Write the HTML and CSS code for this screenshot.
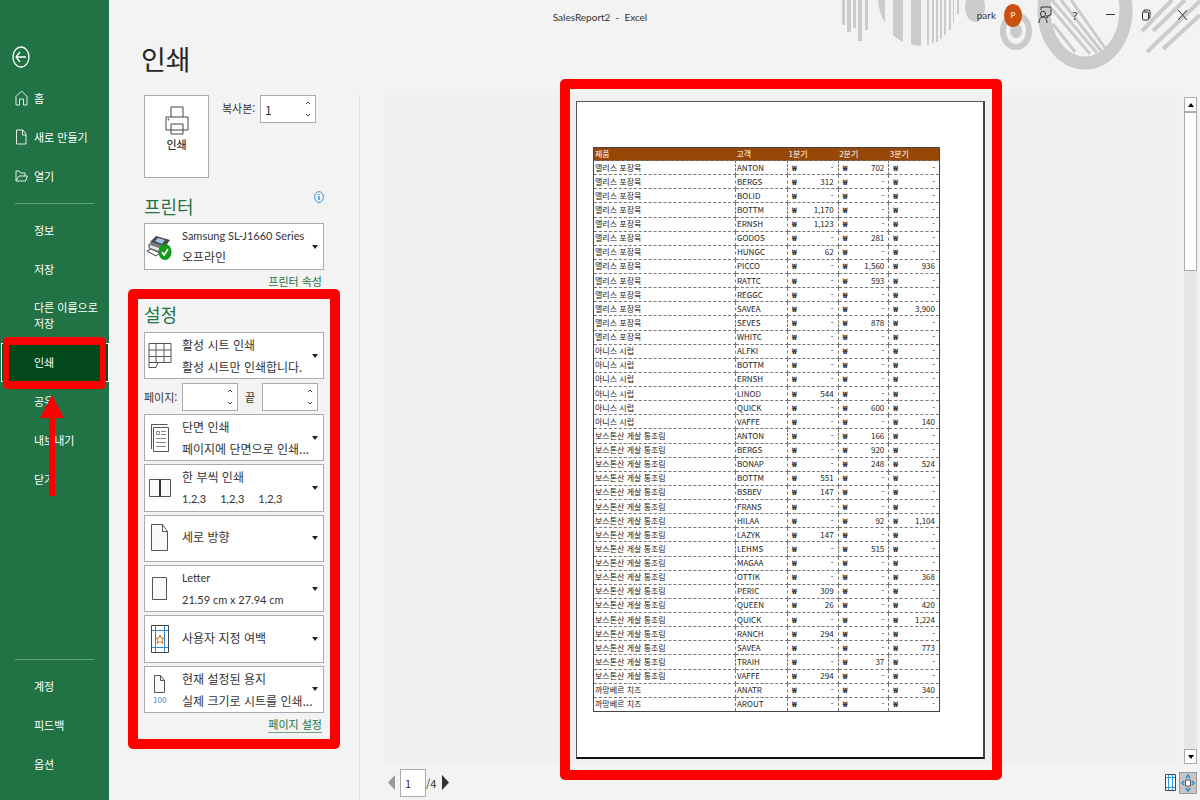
FILE: index.html
```html
<!DOCTYPE html>
<html lang="ko">
<head>
    <meta charset="utf-8">
    <title>SalesReport2 - Excel</title>
    <link rel="stylesheet" href="styles.css">
</head>
<body>
    <header class="titlebar">
        <svg class="art" width="360" height="72" viewBox="0 0 360 72" fill="#cbcbcb">
            <path d="M2 0h3v25h-3zM7 0h4v32h-4zM13 0h3v28h-3zM18 0h4v41h-4zM25 0h3v30h-3zM38 0h7v23q-6-10-7-23zM53 0h10v42q-5-2-10-7zM71 0h10v46q-5 0-10-2zM87 0h2v45h-2zM92 0h2v43h-2zM96 0h2v42h-2zM100 0h2v39h-2zM104 0h2v35h-2zM109 0h2v30h-2zM113 0h1v23h-1zM117 0h2v14h-2z"/>
            <ellipse cx="135" cy="7" rx="10" ry="15"/>
            <ellipse cx="176" cy="31" rx="13" ry="16" fill="none" stroke="#cbcbcb" stroke-width="6"/>
            <ellipse cx="176" cy="31" rx="6" ry="7"/>
            <ellipse cx="245" cy="10" rx="41" ry="53" fill="none" stroke="#cbcbcb" stroke-width="13"/>
            <path d="M212 9l38 45M212 0l45 53M221 0l41 52M231 0l34 48M213 24l22 28" stroke="#cbcbcb" stroke-width="3"/>
            <path d="M332 0l-30 31M345 0l-32 31M360 1l-53 51M360 15l-37 34" stroke="#cbcbcb" stroke-width="4"/>
        </svg>
        <span class="file-name">SalesReport2&nbsp; -&nbsp; Excel</span>
        <div class="window-tools">
            <span class="user">park</span>
            <span class="avatar">P</span>
            <button class="tool feedback" aria-label="피드백">
                <svg width="14" height="18" viewBox="0 0 14 18" fill="none" stroke="#333"><ellipse cx="5" cy="8" rx="2.5" ry="3"/><path d="M1 17q0-6 4-6t4 6M3 4V1h10v8h-2l-2 3V9"/></svg>
            </button>
            <button class="tool help" aria-label="도움말">?</button>
            <button class="tool" aria-label="최소화">
                <svg width="9" height="12" viewBox="0 0 9 12" stroke="#333"><path d="M0 5.5h9"/></svg>
            </button>
            <button class="tool" aria-label="이전 크기로 복원">
                <svg width="9" height="12" viewBox="0 0 9 12" fill="none" stroke="#333"><rect x="0.500" y="3" width="6" height="8" rx="1"/><path d="M2 3V1h5l1 1v7H7"/></svg>
            </button>
            <button class="tool" aria-label="닫기">
                <svg width="9" height="12" viewBox="0 0 9 12" stroke="#333"><path d="M0 1l9 10M9 1L0 11"/></svg>
            </button>
        </div>
    </header>

    <nav class="sidebar">
        <button class="back" aria-label="뒤로">
            <svg width="18" height="22" viewBox="0 0 18 22" fill="none" stroke="#fff" stroke-width="1.300"><ellipse cx="9" cy="11" rx="8" ry="10"/><path d="M14 11H4M8 6l-4 5 4 5"/></svg>
        </button>
        <a class="nav-item" href="#home">
            <svg class="nav-icon" width="13" height="16" viewBox="0 0 13 16" fill="none" stroke="#e4efe8"><path d="M1 6.500L6.500 1 12 6.500V15H8.500V9h-4v6H1z"/></svg>홈</a>
        <a class="nav-item" href="#new">
            <svg class="nav-icon" width="13" height="16" viewBox="0 0 13 16" fill="none" stroke="#e4efe8"><path d="M1.500 1H8l3 4v10H1.500zM7.500 1v5H11"/></svg>새로 만들기</a>
        <a class="nav-item" href="#open">
            <svg class="nav-icon" width="13" height="16" viewBox="0 0 13 16" fill="none" stroke="#e4efe8"><path d="M1 13V3h3l1.500 2H10v3M1 13l3-5h8.500l-2 5z"/></svg>열기</a>
        <hr class="line">
        <a class="nav-item" href="#info">정보</a>
        <a class="nav-item" href="#save">저장</a>
        <a class="nav-item tall" href="#saveas">다른 이름으로 저장</a>
        <a class="nav-item active" href="#print">인쇄<span class="mark"></span></a>
        <a class="nav-item" href="#share">공유
            <svg class="arrow" width="24" height="101" viewBox="0 0 24 101" fill="#f00"><path d="M12 0l12 23h-9v78H9V23H0z"/></svg></a>
        <a class="nav-item" href="#export">내보내기</a>
        <a class="nav-item" href="#close">닫기</a>
        <hr class="line bottom">
        <a class="nav-item" href="#account">계정</a>
        <a class="nav-item" href="#feedback">피드백</a>
        <a class="nav-item" href="#options">옵션</a>
    </nav>

    <main class="content">
        <h1>인쇄</h1>
        <section class="panel">
            <div class="print-row">
                <button class="print-button">
                    <svg width="24" height="29" viewBox="0 0 24 29" fill="#fff" stroke="#444"><path d="M6 11V1h12v10M1 11h22v13H1zM6 18h12v10H6z"/><circle cx="3.500" cy="13.500" r="0.500"/></svg>
                    인쇄
                </button>
                <label for="copies">복사본:</label>
                <span class="spin">
                    <input type="number" id="copies" value="1">
                    <svg width="6" height="18" viewBox="0 0 6 18" fill="none" stroke="#444"><path d="M1 4l2-2 2 2M1 14l2 2 2-2"/></svg>
                </span>
            </div>

            <div class="heading">
                <h2>프린터</h2>
                <svg width="10" height="12" viewBox="0 0 10 12" fill="none" stroke="#3a96dd"><ellipse cx="5" cy="6" rx="4.400" ry="5.400"/><path d="M5 5v4M5 3v1" stroke-width="1.500"/></svg>
            </div>
            <div class="picker latin">
                <select aria-label="프린터"><option>Samsung SL-J1660 Series</option></select>
                <svg width="30" height="30" viewBox="0 0 30 30"><path d="M5 10l6-6 14 4-5 7z" fill="#4a4a4a"/><path d="M10 9l3-3 7 2-3 4z" fill="#9cc8f0"/><path d="M3 13l3-3 13 5v7L4 17z" fill="#777"/><path d="M5 13l12 4v3L5 16z" fill="#e6e6e6"/><path d="M2 19l4-2 9 4-4 3z" fill="#fff" stroke="#444"/><ellipse cx="20" cy="20" rx="6.500" ry="8" fill="#109a18"/><path d="M17 20l2 3 4-6" fill="none" stroke="#fff" stroke-width="1.800"/></svg>
                <span class="desc korean">오프라인</span>
            </div>
            <a class="link" href="#printer">프린터 속성</a>

            <div class="settings">
                <h2>설정</h2>
                <div class="picker">
                    <select aria-label="인쇄 대상"><option>활성 시트 인쇄</option></select>
                    <svg width="30" height="30" viewBox="0 0 30 30" fill="none" stroke="#555"><path d="M4 2.500h22v19H13l-2 5H4zM4 9h22M4 15.500h22M11 2.500v19M19 2.500v19M4 21.500h9"/></svg>
                    <span class="desc">활성 시트만 인쇄합니다.</span>
                </div>
                <div class="pages">
                    <label for="from">페이지:</label>
                    <span class="spin">
                        <input type="number" id="from">
                        <svg width="6" height="18" viewBox="0 0 6 18" fill="none" stroke="#444"><path d="M1 4l2-2 2 2M1 14l2 2 2-2"/></svg>
                    </span>
                    <label for="to">끝</label>
                    <span class="spin">
                        <input type="number" id="to">
                        <svg width="6" height="18" viewBox="0 0 6 18" fill="none" stroke="#444"><path d="M1 4l2-2 2 2M1 14l2 2 2-2"/></svg>
                    </span>
                </div>
                <div class="pickers">
                    <div class="picker">
                        <select aria-label="단면 또는 양면"><option>단면 인쇄</option></select>
                        <svg width="30" height="30" viewBox="0 0 30 30" fill="none" stroke="#555"><path d="M6.500 26V1.500h16M8.500 4.500h15v24h-15z"/><path d="M11.500 8.500h3v3h-3zM16 8.500h5M16 11.500h5M11 15.500h10M11 19.500h10M11 23.500h10" stroke="#888"/></svg>
                        <span class="desc">페이지에 단면으로 인쇄...</span>
                    </div>
                    <div class="picker">
                        <select aria-label="한 부씩 인쇄"><option>한 부씩 인쇄</option></select>
                        <svg width="30" height="30" viewBox="0 0 30 30" fill="#fafafa" stroke="#555"><path d="M4.500 6.500h21v17h-21z"/><path d="M15 6v18" stroke="#333" stroke-width="2"/></svg>
                        <span class="desc sets"><span>1,2,3</span><span>1,2,3</span><span>1,2,3</span></span>
                    </div>
                    <div class="picker single">
                        <select aria-label="용지 방향"><option>세로 방향</option></select>
                        <svg width="30" height="30" viewBox="0 0 30 30" fill="#fafafa" stroke="#555"><path d="M6.500 1.500h11l5 7v19h-16zM17.500 1.500v7h5"/></svg>
                    </div>
                    <div class="picker latin">
                        <select aria-label="용지 크기"><option>Letter</option></select>
                        <svg width="30" height="30" viewBox="0 0 30 30" fill="#fafafa" stroke="#555"><path d="M7.500 3.500h14v22h-14z"/></svg>
                        <span class="desc">21.59 cm x 27.94 cm</span>
                    </div>
                    <div class="picker single">
                        <select aria-label="여백"><option>사용자 지정 여백</option></select>
                        <svg width="30" height="30" viewBox="0 0 30 30" fill="none"><path d="M6.500 1.500h17v27h-17z" stroke="#444"/><path d="M10.500 2v26M19.500 2v26M7 6.500h16M7 23.500h16" stroke="#2e8bd0"/><path d="M15 11l1 3h3l-2 2 1 3.500-3-2-3 2 1-3.500-2-2h3z" stroke="#d9741a"/></svg>
                    </div>
                    <div class="picker">
                        <select aria-label="배율"><option>현재 설정된 용지</option></select>
                        <svg width="30" height="30" viewBox="0 0 30 30"><path d="M9.500 1.500h6l4 5v12h-10zM15.500 1.500v5h4" fill="#fafafa" stroke="#555"/><text class="scale" x="8" y="29">100</text></svg>
                        <span class="desc">실제 크기로 시트를 인쇄...</span>
                    </div>
                </div>
                <a class="link" href="#setup">페이지 설정</a>
                <span class="mark"></span>
            </div>
        </section>

        <section class="preview">
            <div class="canvas">
                <div class="paper">
                    <table class="report">
                        <thead>
                            <tr><th class="product">제품</th><th class="customer">고객</th><th>1분기</th><th>2분기</th><th>3분기</th></tr>
                        </thead>
                        <tbody id="rows"></tbody>
                    </table>
                    <span class="mark"></span>
                </div>
            </div>
            <div class="scrollbar">
                <button aria-label="위로"><svg width="6" height="4" viewBox="0 0 6 4"><path d="M0 4l3-4 3 4z"/></svg></button>
                <span class="thumb"></span>
                <button aria-label="아래로"><svg width="6" height="4" viewBox="0 0 6 4"><path d="M0 0h6L3 4z"/></svg></button>
            </div>
            <div class="pager">
                <button aria-label="이전 페이지"><svg width="8" height="15" viewBox="0 0 8 15" fill="#999"><path d="M7 0v15L0 7.500z"/></svg></button>
                <input class="page" type="text" value="1" aria-label="현재 페이지">
                <span>/4</span>
                <button aria-label="다음 페이지"><svg width="8" height="15" viewBox="0 0 8 15" fill="#333"><path d="M1 0v15l7-7.500z"/></svg></button>
                <button class="margins" aria-label="여백 표시">
                    <svg width="11" height="17" viewBox="0 0 11 17" fill="#fff"><path d="M0.500 0.500h10v16H0.500z" stroke="#444"/><path d="M3.500 1v15M7.500 1v15M1 3.500h9M1 13.500h9" stroke="#2e9be0"/></svg>
                </button>
                <button class="fit" aria-label="페이지 확대/축소">
                    <svg width="14" height="18" viewBox="0 0 14 18" fill="none" stroke="#2e8bd0" stroke-width="1.500"><path d="M5 4l2-3 2 3M5 14l2 3 2-3M3 7L1 9l2 2M11 7l2 2-2 2"/><path d="M4.500 6h5v6h-5z" fill="#fff" stroke="#555" stroke-width="1"/></svg>
                </button>
            </div>
        </section>
    </main>

    <script>
        // 제품별 고객 매출 (1분기, 2분기, 3분기)
        const sales = {
            "앨리스 포장육": [
                ["ANTON", "-", "702", "-"], ["BERGS", "312", "-", "-"], ["BOLID", "-", "-", "-"],
                ["BOTTM", "1,170", "-", "-"], ["ERNSH", "1,123", "-", "-"], ["GODOS", "-", "281", "-"],
                ["HUNGC", "62", "-", "-"], ["PICCO", "-", "1,560", "936"], ["RATTC", "-", "593", "-"],
                ["REGGC", "-", "-", "-"], ["SAVEA", "-", "-", "3,900"], ["SEVES", "-", "878", "-"],
                ["WHITC", "-", "-", "-"]
            ],
            "아니스 시럽": [
                ["ALFKI", "-", "-", "-"], ["BOTTM", "-", "-", "-"], ["ERNSH", "-", "-", "-"],
                ["LINOD", "544", "-", "-"], ["QUICK", "-", "600", "-"], ["VAFFE", "-", "-", "140"]
            ],
            "보스톤산 게살 통조림": [
                ["ANTON", "-", "166", "-"], ["BERGS", "-", "920", "-"], ["BONAP", "-", "248", "524"],
                ["BOTTM", "551", "-", "-"], ["BSBEV", "147", "-", "-"], ["FRANS", "-", "-", "-"],
                ["HILAA", "-", "92", "1,104"], ["LAZYK", "147", "-", "-"], ["LEHMS", "-", "515", "-"],
                ["MAGAA", "-", "-", "-"], ["OTTIK", "-", "-", "368"], ["PERIC", "309", "-", "-"],
                ["QUEEN", "26", "-", "420"], ["QUICK", "-", "-", "1,224"], ["RANCH", "294", "-", "-"],
                ["SAVEA", "-", "-", "773"], ["TRAIH", "-", "37", "-"], ["VAFFE", "294", "-", "-"]
            ],
            "까망베르 치즈": [
                ["ANATR", "-", "-", "340"], ["AROUT", "-", "-", "-"]
            ]
        };

        // 표에 행 추가
        const body = document.getElementById("rows");
        for (const product in sales) {
            for (const [customer, ...amounts] of sales[product]) {
                const row = body.insertRow();
                row.insertCell().innerText = product;
                row.insertCell().innerText = customer;
                for (const amount of amounts) {
                    const cell = row.insertCell();
                    cell.className = "amount";
                    cell.innerHTML = '<span class="won">₩</span>' + amount;
                }
            }
        }
    </script>
</body>
</html>
```
FILE: styles.css
```css
* {
    box-sizing: border-box;
}
body {
    margin: 0;
    min-height: 100vh;
    display: grid;
    grid-template-columns: 109px 1fr;
    grid-template-rows: 30px 1fr;
    background-color: #f3f3f3;
    border-bottom: 1px solid #cfcfcf;
    color: #333;
    font-family: "Noto Sans CJK KR", "Noto Sans", sans-serif;
    font-size: 12px;
}
button, input, select {
    font: inherit;
    color: inherit;
    margin: 0;
}
button {
    padding: 0;
    border: none;
    background: none;
}
svg {
    display: block;
    flex-shrink: 0;
}
h1, h2 {
    font-weight: normal;
    margin: 0;
}
.mark {
    position: absolute;
    border: 10px solid #f00;
    border-radius: 5px;
    pointer-events: none;
    z-index: 3;
}

/* title bar */
.titlebar {
    grid-area: 1 / 1 / 2 / 3;
    position: relative;
    z-index: 2;
    display: grid;
    grid-template-columns: 1fr auto 1fr;
    align-items: center;
    font-family: Lato, "Noto Sans CJK KR", sans-serif;
    font-size: 10px;
}
.art {
    position: absolute;
    top: 0;
    right: 0;
    z-index: -1;
}
.file-name {
    grid-column: 2;
    padding-top: 4px;
}
.window-tools {
    display: flex;
    align-items: center;
    justify-content: flex-end;
}
.user {
    font-size: 10px;
    margin-right: 8px;
}
.avatar {
    width: 18px;
    height: 23px;
    line-height: 23px;
    border-radius: 50%;
    background-color: #ca5010;
    color: #fff;
    font-size: 8px;
    text-align: center;
    margin-right: 10px;
}
.tool {
    width: 36px;
    height: 30px;
    display: flex;
    align-items: center;
    justify-content: center;
}
.tool.feedback {
    width: 26px;
}
.tool.help {
    width: 34px;
    font-size: 12px;
}

/* sidebar */
.sidebar {
    grid-area: 1 / 1 / 3 / 2;
    display: flex;
    flex-direction: column;
    padding: 46px 0 16px;
    background-color: #217346;
}
.back {
    width: 18px;
    height: 22px;
    margin: 0 0 11px 12px;
}
.nav-item {
    position: relative;
    display: flex;
    align-items: center;
    min-height: 39px;
    padding: 0 8px 2px 34px;
    color: #fff;
    font-size: 11px;
    line-height: 16px;
    text-decoration: none;
}
.nav-icon {
    margin: 0 6px 0 -19px;
}
.nav-item.tall {
    min-height: 54px;
}
.nav-item.active {
    margin-left: 1px;
    padding-left: 33px;
    background-color: #04491c;
    outline: 1px solid #fff;
    outline-offset: -1px;
}
.nav-item .mark {
    inset: -6px 3px -7px 2px;
    border-width: 8px 6px;
}
.arrow {
    position: absolute;
    left: 40px;
    top: 13px;
    z-index: 3;
}
.line {
    width: 79px;
    margin: 7px 0 7px 15px;
    border: none;
    border-top: 1px solid #5fa27c;
}
.line.bottom {
    margin-top: auto;
}

/* content */
.content {
    grid-area: 1 / 2 / 3 / 3;
    display: grid;
    grid-template-columns: 251px 1fr;
    grid-template-rows: 95px 1fr;
}
h1 {
    grid-column: 1 / 3;
    padding: 40px 0 0 32px;
    color: #262626;
    font-size: 27px;
    line-height: 38px;
}
h2 {
    color: #217346;
    font-size: 18px;
    line-height: 24px;
}
.panel {
    padding: 0 35px;
    border-right: 1px solid #e1e1e1;
}
.print-row {
    display: flex;
    align-items: flex-start;
    height: 83px;
    font-size: 11px;
}
.print-row label {
    margin: 0 6px 0 13px;
    width: 32px;
    line-height: 26px;
    white-space: nowrap;
}
.print-button {
    width: 65px;
    height: 83px;
    display: flex;
    flex-direction: column;
    align-items: center;
    gap: 1px;
    padding-top: 10px;
    background-color: #fff;
    border: 1px solid #ababab;
    font-weight: 500;
}
.spin {
    display: flex;
    align-items: center;
    width: 56px;
    height: 28px;
    padding-right: 4px;
    background-color: #fff;
    border: 1px solid #ababab;
}
.spin input {
    flex: 1;
    min-width: 0;
    padding: 0 0 0 4px;
    border: none;
    background: none;
    outline: none;
    font-size: 12px;
    appearance: textfield;
}
.spin input::-webkit-inner-spin-button {
    appearance: none;
}
.heading {
    display: flex;
    justify-content: space-between;
    margin: 16px 0 5px;
}
.heading svg {
    margin-top: -3px;
}
.picker {
    position: relative;
    display: grid;
    grid-template-columns: 37px 1fr;
    grid-template-rows: 1fr 1fr;
    min-height: 47px;
    background-color: #fff;
    border: 1px solid #ababab;
}
.picker::after {
    content: "";
    position: absolute;
    right: 5px;
    top: 50%;
    margin-top: -2px;
    border: 3px solid transparent;
    border-top: 4px solid #222;
    border-bottom: none;
    pointer-events: none;
}
.picker select {
    grid-area: 1 / 1 / 3 / 3;
    min-width: 0;
    padding: 0 4px 22px 37px;
    border: none;
    background: none;
    appearance: none;
}
.picker.single select {
    padding-bottom: 3px;
}
.picker > svg {
    grid-area: 1 / 1 / 3 / 2;
    align-self: center;
    pointer-events: none;
}
.picker.latin, .sets {
    font-family: Lato, "Noto Sans CJK KR", sans-serif;
    font-size: 11px;
}
.picker .korean {
    font-size: 12px;
}
.desc {
    grid-area: 2 / 2 / 3 / 3;
    align-self: center;
    line-height: 18px;
    white-space: nowrap;
    pointer-events: none;
}
.sets {
    display: flex;
    gap: 14px;
}
.scale {
    fill: #2e8bd0;
    font-size: 8px;
}
.link {
    display: block;
    width: fit-content;
    margin: 4px 2px 0 auto;
    color: #217346;
    font-size: 11px;
    line-height: 15px;
    text-decoration: none;
    border-bottom: 1px solid #6fa588;
}
.settings {
    position: relative;
    margin-top: 12px;
}
.settings h2 {
    margin-bottom: 6px;
}
.settings > .mark {
    inset: -13px -16px -16px;
}
.pages {
    display: flex;
    align-items: center;
    margin: 4px 0 3px;
    font-size: 11px;
}
.pages label {
    width: 38px;
    white-space: nowrap;
}
.pages .spin + label {
    width: 24px;
    padding-left: 7px;
}
.pickers {
    display: grid;
    grid-auto-rows: 1fr;
    gap: 3px;
    height: 299px;
}

/* print preview */
.preview {
    display: grid;
    grid-template-columns: 1fr 20px;
    grid-template-rows: 1fr 35px;
}
.canvas {
    margin: 0 3px 0 24px;
    padding: 6px 0;
    background-color: #f0f0f0;
    display: flex;
    justify-content: center;
    align-items: flex-start;
}
.paper {
    position: relative;
    width: 409px;
    padding: 45px 43px 45px 16px;
    background-color: #fff;
    border: 1px solid #555;
    border-right: 2px solid #444;
    border-bottom: 2px solid #111;
}
.paper .mark {
    inset: -23px -19px -23px -17px;
}
.report {
    width: 100%;
    height: 565px;
    table-layout: fixed;
    border-collapse: collapse;
    border: 1px solid #444;
    color: #222;
    font-size: 8px;
    line-height: 12px;
}
.report th {
    padding: 0 1px;
    background-color: #974706;
    color: #fff;
    font-weight: normal;
    text-align: left;
}
.report .product {
    width: 142px;
}
.report .customer {
    width: 52px;
}
.report td {
    padding: 0 1px;
    border: 1px dashed #777;
    white-space: nowrap;
}
.report .amount {
    padding: 0 4px;
    text-align: right;
}
.won {
    float: left;
    font-weight: bold;
}
.scrollbar {
    display: flex;
    flex-direction: column;
    justify-content: space-between;
    width: 13px;
    margin: 2px 0 1px 4px;
    background-color: #e6e6e6;
}
.scrollbar button {
    height: 15px;
    display: flex;
    align-items: center;
    justify-content: center;
    background-color: #fff;
    border: 1px solid #ababab;
}
.thumb {
    height: 159px;
    margin-bottom: auto;
    background-color: #fff;
    border: 1px solid #ababab;
}
.pager {
    grid-column: 1 / 3;
    display: flex;
    align-items: center;
    padding: 0 3px 0 28px;
    font-size: 11px;
}
.page {
    width: 26px;
    height: 28px;
    margin-left: 4px;
    padding: 0 4px;
    background-color: #fff;
    border: 1px solid #ababab;
}
.pager span {
    margin-right: 5px;
}
.margins {
    margin-left: auto;
}
.fit {
    width: 18px;
    height: 22px;
    margin-left: 3px;
    padding-left: 1px;
    background-color: #c6c6c6;
    border: 1px solid #999;
}
```
